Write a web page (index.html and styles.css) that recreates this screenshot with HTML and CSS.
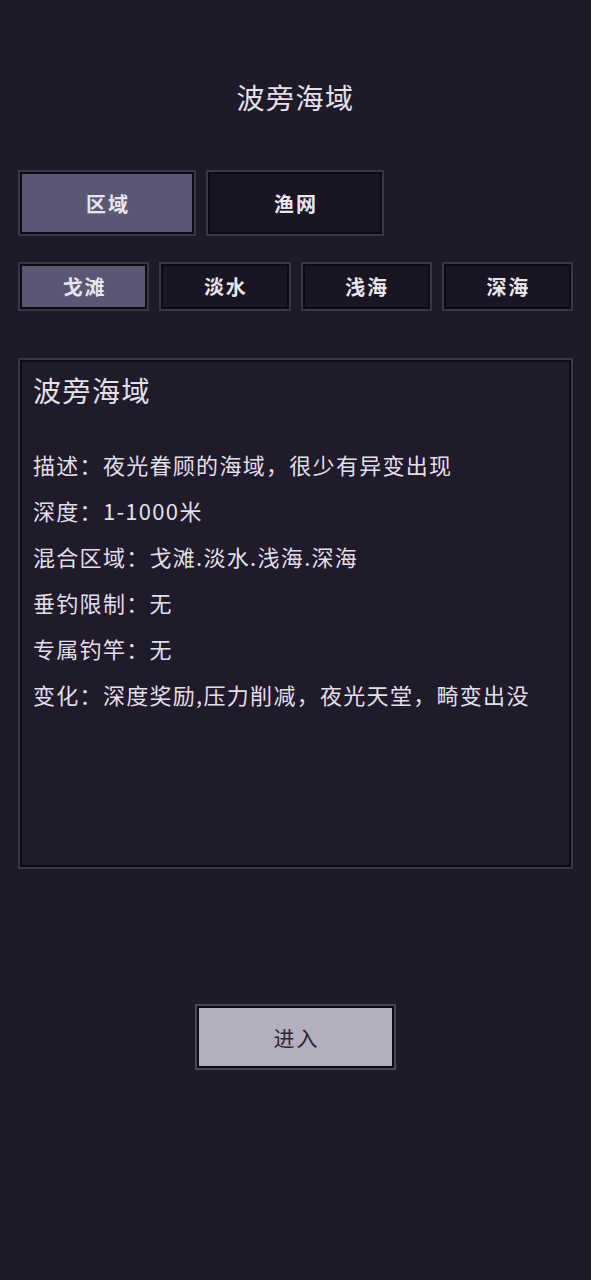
FILE: index.html
```html
<!DOCTYPE html>
<html lang="zh">
<head>
<meta charset="utf-8">
<link rel="stylesheet" href="styles.css">
</head>
<body>
<div class="page">
  <h1 class="title">波旁海域</h1>
  <div class="tabs-main">
    <div class="btn btn-lg active">区域</div>
    <div class="btn btn-lg">渔网</div>
  </div>
  <div class="tabs-sub">
    <div class="btn btn-sm active">戈滩</div>
    <div class="btn btn-sm">淡水</div>
    <div class="btn btn-sm">浅海</div>
    <div class="btn btn-sm">深海</div>
  </div>
  <div class="panel">
    <div class="panel-title">波旁海域</div>
    <div class="line">描述：夜光眷顾的海域，很少有异变出现</div>
    <div class="line">深度：1-1000米</div>
    <div class="line">混合区域：戈滩.淡水.浅海.深海</div>
    <div class="line">垂钓限制：无</div>
    <div class="line">专属钓竿：无</div>
    <div class="line">变化：深度奖励,压力削减，夜光天堂，畸变出没</div>
  </div>
  <div class="enter-wrap">
    <div class="enter">进入</div>
  </div>
</div>
</body>
</html>
```

FILE: styles.css
```css
html, body {
  margin: 0;
  padding: 0;
  background: #1f1a29;
}
body {
  font-family: "Noto Sans CJK SC", "Noto Sans", sans-serif;
  color: #e2dfe8;
  width: 591px;
  height: 1280px;
}
.page {
  padding: 0 18px;
}
.title {
  margin: 0;
  padding-top: 76px;
  height: 42px;
  line-height: 42px;
  font-size: 28px;
  font-weight: 400;
  letter-spacing: 1.5px;
  text-align: center;
  color: #e4e1ea;
}
.tabs-main {
  display: flex;
  gap: 10px;
  margin-top: 52px;
}
.btn {
  box-sizing: border-box;
  display: flex;
  align-items: center;
  justify-content: center;
  background: #1a1522;
  border: 2px solid #3a3647;
  box-shadow: inset 0 0 0 2px #0e0a14;
  color: #e8e5ee;
  letter-spacing: 2px;
  padding-left: 2px;
}
.btn.active {
  background: #5a5774;
}
.btn-lg {
  width: 178px;
  height: 66px;
  font-size: 20px;
  font-weight: 700;
}
.tabs-sub {
  display: grid;
  grid-template-columns: repeat(4, 1fr);
  gap: 10px;
  margin-top: 26px;
}
.btn-sm {
  height: 49px;
  font-size: 20px;
  font-weight: 700;
}
.panel {
  box-sizing: border-box;
  margin-top: 47px;
  height: 511px;
  background: #201b2b;
  border: 2px solid #3a3647;
  box-shadow: inset 0 0 0 2px #0e0a14;
  padding: 12px 13px;
}
.panel-title {
  font-size: 28px;
  line-height: 36px;
  letter-spacing: 1.5px;
  color: #e4e1ea;
  margin-bottom: 41px;
}
.line {
  font-size: 22px;
  line-height: 30px;
  letter-spacing: 1.3px;
  margin-bottom: 16px;
  color: #e2dfe8;
  white-space: nowrap;
}
.enter-wrap {
  display: flex;
  justify-content: center;
  margin-top: 135px;
}
.enter {
  box-sizing: border-box;
  width: 201px;
  height: 66px;
  display: flex;
  align-items: center;
  justify-content: center;
  background: #b3afbf;
  border: 2px solid #4a4659;
  box-shadow: inset 0 0 0 2px #0e0a14;
  color: #2b2635;
  font-size: 21px;
  letter-spacing: 2px;
  padding-left: 2px;
}
```
